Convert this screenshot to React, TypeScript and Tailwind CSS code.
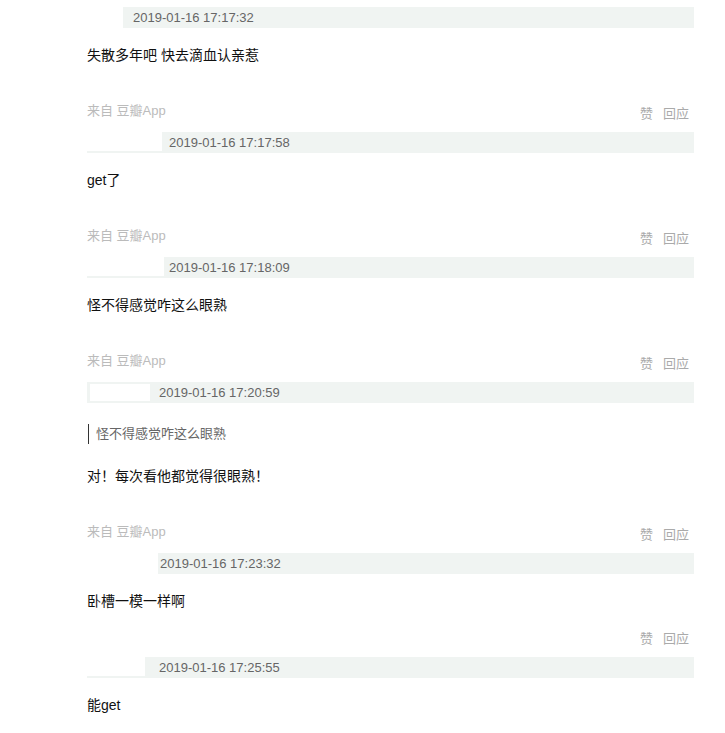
import React from 'react'

type Reply = {
  time: string
  boxWidth: number
  box: 'full' | 'bottom' | 'all'
  dateGap: number
  quote?: string
  text: string
  fromApp: boolean
  actions: boolean
}

const replies: Reply[] = [
  { time: '2019-01-16 17:17:32', boxWidth: 36, box: 'full', dateGap: 10, text: '失散多年吧 快去滴血认亲惹', fromApp: true, actions: true },
  { time: '2019-01-16 17:17:58', boxWidth: 75, box: 'bottom', dateGap: 7, text: 'get了', fromApp: true, actions: true },
  { time: '2019-01-16 17:18:09', boxWidth: 77, box: 'bottom', dateGap: 5, text: '怪不得感觉咋这么眼熟', fromApp: true, actions: true },
  { time: '2019-01-16 17:20:59', boxWidth: 60, box: 'all', dateGap: 9, quote: '怪不得感觉咋这么眼熟', text: '对！每次看他都觉得很眼熟！', fromApp: true, actions: true },
  { time: '2019-01-16 17:23:32', boxWidth: 71, box: 'full', dateGap: 2, text: '卧槽一模一样啊', fromApp: false, actions: true },
  { time: '2019-01-16 17:25:55', boxWidth: 58, box: 'bottom', dateGap: 14, text: '能get', fromApp: false, actions: false },
]

const boxPad = {
  full: '',
  bottom: 'pb-[2px]',
  all: 'py-[2px] pl-[3px]',
}

const ReplyHeader = ({ r }: { r: Reply }) => (
  <div className="flex h-[21px] items-stretch bg-[#f0f4f2]">
    <div className={`flex shrink-0 flex-col ${boxPad[r.box]}`}>
      <span className="block h-full bg-white" style={{ width: r.boxWidth }} />
    </div>
    <span className="text-[13px] leading-[21px] text-[#666]" style={{ marginLeft: r.dateGap }}>
      {r.time}
    </span>
  </div>
)

export default function App() {
  return (
    <div
      className="min-h-[733px] w-[725px] bg-white pt-[7px]"
      style={{ fontFamily: '"Liberation Sans", Arial, "Noto Sans CJK SC", sans-serif' }}
    >
      <div className="ml-[87px] w-[607px]">
        {replies.map((r, i) => (
          <div key={i}>
            <ReplyHeader r={r} />
            {r.quote ? (
              <>
                <div className="ml-[1px] mt-[21px] border-l border-[#333] pl-[7px] text-[13px] leading-[20px] text-[#666]">
                  {r.quote}
                </div>
                <p className="mt-[22px] text-[14px] leading-[20px] text-[#111]">{r.text}</p>
              </>
            ) : (
              <p className="mt-[17px] text-[14px] leading-[20px] text-[#111]">{r.text}</p>
            )}
            {r.actions && (
              <div className={`mb-[11px] flex h-[20px] justify-between ${r.fromApp ? 'mt-[36px]' : 'mt-[15px]'}`}>
                <span className="text-[13px] leading-[20px] text-[#bbb]">{r.fromApp ? '来自 豆瓣App' : ''}</span>
                <div className="mt-[3px] flex pr-[5px] text-[13px] leading-[20px] text-[#aaa]">
                  <a className="cursor-pointer">赞</a>
                  <a className="ml-[10px] cursor-pointer">回应</a>
                </div>
              </div>
            )}
          </div>
        ))}
      </div>
    </div>
  )
}
